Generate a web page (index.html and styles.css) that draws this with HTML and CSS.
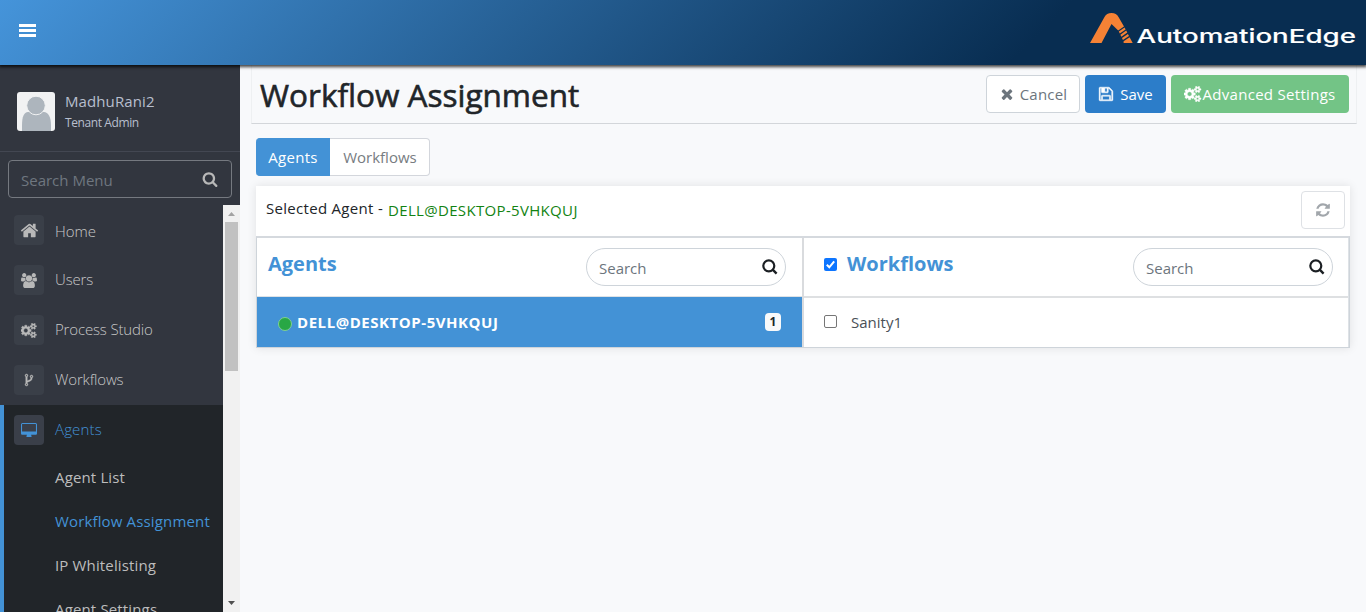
FILE: index.html
```html
<!DOCTYPE html>
<html lang="en">
<head>
<meta charset="utf-8">
<title>Workflow Assignment</title>
<link rel="stylesheet" href="styles.css">
</head>
<body>
<svg class="defs" width="0" height="0">
  <symbol id="search" viewBox="0 0 1792 1792"><path d="M1216 832q0-185-131.500-316.500t-316.500-131.500-316.500 131.500-131.500 316.500 131.500 316.500 316.500 131.500 316.500-131.500 131.500-316.500zm512 832q0 52-38 90t-90 38q-54 0-90-38l-343-342q-179 124-399 124-143 0-273.500-55.500t-225-150-150-225-55.500-273.500 55.500-273.500 150-225 225-150 273.500-55.500 273.500 55.500 225 150 150 225 55.500 273.500q0 220-124 399l343 343q37 37 37 90z"/></symbol>
  <symbol id="home" viewBox="0 0 1792 1792"><path d="M1472 992v480q0 26-19 45t-45 19h-384v-384h-256v384h-384q-26 0-45-19t-19-45v-480q0-1 .5-3t.5-3l575-474 575 474q1 2 1 6zm223-69l-62 74q-8 9-21 11h-3q-13 0-21-7l-692-577-692 577q-12 8-24 7-13-2-21-11l-62-74q-8-10-7-23.500t11-21.500l719-599q32-26 76-26t76 26l244 204v-195q0-14 9-23t23-9h192q14 0 23 9t9 23v408l219 182q10 8 11 21.500t-7 23.500z"/></symbol>
  <symbol id="users" viewBox="-64 0 1920 1792"><path d="M529 896q-162 5-265 128h-134q-82 0-138-40.500t-56-118.500q0-353 124-353 6 0 43.500 21t97.500 42.500 119 21.500q67 0 133-23-5 37-5 66 0 139 81 256zm1071 637q0 120-73 189.500t-194 69.500h-874q-121 0-194-69.500t-73-189.500q0-53 3.500-103.500t14-109 26.500-108.500 43-97.500 62-81 85.500-53.500 111.500-20q10 0 43 21.500t73 48 107 48 135 21.500 135-21.500 107-48 73-48 43-21.500q61 0 111.500 20t85.500 53.500 62 81 43 97.500 26.500 108.500 14 109 3.500 103.500zm-1024-1277q0 106-75 181t-181 75-181-75-75-181 75-181 181-75 181 75 75 181zm704 384q0 159-112.500 271.500t-271.500 112.500-271.500-112.500-112.500-271.500 112.500-271.500 271.500-112.500 271.500 112.500 112.500 271.500zm576 225q0 78-56 118.500t-138 40.500h-134q-103-123-265-128 81-117 81-256 0-29-5-66 66 23 133 23 59 0 119-21.500t97.500-42.500 43.500-21q124 0 124 353zm-128-609q0 106-75 181t-181 75-181-75-75-181 75-181 181-75 181 75 75 181z"/></symbol>
  <symbol id="cogs" viewBox="0 0 1920 1792"><path d="M832 896q0-106-75-181t-181-75-181 75-75 181 75 181 181 75 181-75 75-181zm768 512q0-52-38-90t-90-38-90 38-38 90q0 53 37.500 90.500t90.500 37.500 90.500-37.500 37.500-90.500zm0-1024q0-52-38-90t-90-38-90 38-38 90q0 53 37.500 90.500t90.500 37.500 90.500-37.500 37.500-90.500zm-384 421v185q0 10-7 19.500t-16 10.500l-155 24q-11 35-32 76 34 48 90 115 7 11 7 20 0 12-7 19-23 30-82.500 89.500t-78.500 59.500q-11 0-21-7l-115-90q-37 19-77 31-11 108-23 155-7 24-30 24h-186q-11 0-20-7.500t-10-17.500l-23-153q-34-10-75-31l-118 89q-7 7-20 7-11 0-21-8-144-133-144-160 0-9 7-19 10-14 41-53t47-61q-23-44-35-82l-152-24q-10-1-17-9.500t-7-19.500v-185q0-10 7-19.500t16-10.500l155-24q11-35 32-76-34-48-90-115-7-11-7-20 0-12 7-20 22-30 82-89t79-59q11 0 21 7l115 90q34-18 77-32 11-108 23-154 7-24 30-24h186q11 0 20 7.500t10 17.500l23 153q34 10 75 31l118-89q8-7 20-7 11 0 21 8 144 133 144 160 0 9-7 19-12 16-42 54t-45 60q23 48 34 82l152 23q10 2 17 10.500t7 19.500zm640 533v140q0 16-149 31-12 27-30 52 51 113 51 138 0 4-4 7-122 71-124 71-8 0-46-47t-52-68q-20 2-30 2t-30-2q-14 21-52 68t-46 47q-2 0-124-71-4-3-4-7 0-25 51-138-18-25-30-52-149-15-149-31v-140q0-16 149-31 13-29 30-52-51-113-51-138 0-4 4-7 4-2 35-20t59-34 30-16q8 0 46 46.500t52 67.500q20-2 30-2t30 2q51-71 92-112l6-2q4 0 124 70 4 3 4 7 0 25-51 138 17 23 30 52 149 15 149 31zm0-1024v140q0 16-149 31-12 27-30 52 51 113 51 138 0 4-4 7-122 71-124 71-8 0-46-47t-52-68q-20 2-30 2t-30-2q-14 21-52 68t-46 47q-2 0-124-71-4-3-4-7 0-25 51-138-18-25-30-52-149-15-149-31v-140q0-16 149-31 13-29 30-52-51-113-51-138 0-4 4-7 4-2 35-20t59-34 30-16q8 0 46 46.500t52 67.500q20-2 30-2t30 2q51-71 92-112l6-2q4 0 124 70 4 3 4 7 0 25-51 138 17 23 30 52 149 15 149 31z"/></symbol>
  <symbol id="fork" viewBox="0 0 1792 1792"><path d="M672 1472q0-40-28-68t-68-28-68 28-28 68 28 68 68 28 68-28 28-68zm0-1152q0-40-28-68t-68-28-68 28-28 68 28 68 68 28 68-28 28-68zm640 128q0-40-28-68t-68-28-68 28-28 68 28 68 68 28 68-28 28-68zm96 0q0 52-26 96.500t-70 69.500q-2 287-226 414-67 38-203 81-128 40-169.500 71t-41.500 100v26q44 25 70 69.500t26 96.500q0 80-56 136t-136 56-136-56-56-136q0-52 26-96.500t70-69.500v-820q-44-25-70-69.500t-26-96.500q0-80 56-136t136-56 136 56 56 136q0 52-26 96.500t-70 69.500v497q54-26 154-57 55-17 87.500-29.500t70.500-31 59-39.500 40.500-51 28-69.500 8.500-91.500q-44-25-70-69.500t-26-96.500q0-80 56-136t136-56 136 56 56 136z"/></symbol>
  <symbol id="desktop" viewBox="-64 0 1920 1792"><path d="M1728 992v-832q0-13-9.500-22.500t-22.500-9.500h-1600q-13 0-22.500 9.500t-9.500 22.500v832q0 13 9.500 22.500t22.500 9.500h1600q13 0 22.500-9.500t9.500-22.500zm128-832v1088q0 66-47 113t-113 47h-544q0 37 16 77.500t32 71 16 43.500q0 26-19 45t-45 19h-512q-26 0-45-19t-19-45q0-14 16-44t32-70 16-78h-544q-66 0-113-47t-47-113v-1088q0-66 47-113t113-47h1600q66 0 113 47t47 113z"/></symbol>
  <symbol id="times" viewBox="0 0 1792 1792"><path d="M1490 1322q0 40-28 68l-136 136q-28 28-68 28t-68-28l-294-294-294 294q-28 28-68 28t-68-28l-136-136q-28-28-28-68t28-68l294-294-294-294q-28-28-28-68t28-68l136-136q28-28 68-28t68 28l294 294 294-294q28-28 68-28t68 28l136 136q28 28 28 68t-28 68l-294 294 294 294q28 28 28 68z"/></symbol>
  <symbol id="save" viewBox="0 0 1792 1792"><path d="M512 1536h768v-384h-768v384zm896 0h128v-896q0-14-10-38.500t-20-34.500l-281-281q-10-10-34-20t-39-10v416q0 40-28 68t-68 28h-576q-40 0-68-28t-28-68v-416h-128v1280h128v-416q0-40 28-68t68-28h832q40 0 68 28t28 68v416zm-384-928v-320q0-13-9.500-22.500t-22.500-9.500h-192q-13 0-22.500 9.500t-9.500 22.500v320q0 13 9.500 22.500t22.500 9.500h192q13 0 22.500-9.500t9.500-22.500zm640 32v928q0 40-28 68t-68 28h-1344q-40 0-68-28t-28-68v-1344q0-40 28-68t68-28h928q40 0 88 20t76 48l280 280q28 28 48 76t20 88z"/></symbol>
  <symbol id="refresh" viewBox="0 0 1792 1792"><path d="M1639 1056q0 5-1 7-64 268-268 434.500t-478 166.500q-146 0-282.500-55t-243.500-157l-129 129q-19 19-45 19t-45-19-19-45v-448q0-26 19-45t45-19h448q26 0 45 19t19 45-19 45l-137 137q71 66 161 102t187 36q134 0 250-65t186-179q11-17 53-117 8-23 30-23h192q13 0 22.500 9.500t9.500 22.500zm25-800v448q0 26-19 45t-45 19h-448q-26 0-45-19t-19-45 19-45l138-138q-148-137-349-137-134 0-250 65t-186 179q-11 17-53 117-8 23-30 23h-199q-13 0-22.500-9.500t-9.500-22.500v-7q65-268 270-434.500t480-166.500q146 0 284 55.500t245 156.500l130-129q19-19 45-19t45 19 19 45z"/></symbol>
  <symbol id="lens" viewBox="0 0 16 16"><circle cx="6.800" cy="6.800" r="5.500" fill="none" stroke="currentColor" stroke-width="2.200"/><path d="M10.700 10.700L14.600 14.600" stroke="currentColor" stroke-width="2.400"/></symbol>
</svg>

<header class="topbar">
  <svg class="menu" width="17" height="14" viewBox="0 0 17 14"><path d="M0 0h17v3H0zM0 5h17v3H0zM0 10h17v3H0z"/></svg>
  <svg class="logo" width="270" height="42" viewBox="0 0 270 42">
    <path fill="#f58235" d="M2 32L16.500 6Q18.500 2 23.500 2Q28.500 2 30.500 6L36 15.500L30.200 19.500L23.500 13L13.500 32Z"/>
    <path fill="#f58235" d="M30.800 20.600L36.600 16.600L37.600 18.400L31.800 22.500ZM32.400 23.700L38.200 19.600L39.300 21.600L33.300 25.700ZM34 27L39.900 22.900L41 25L34.900 29ZM35.600 30.200L41.600 26.200L44.700 32H35.600Z"/>
    <text x="48.500" y="32" textLength="219.500" lengthAdjust="spacingAndGlyphs">AutomationEdge</text>
  </svg>
</header>

<div class="layout">
  <aside class="sidebar">
    <div class="profile">
      <svg width="38" height="39" viewBox="0 0 38 39"><rect width="38" height="39" rx="3" fill="#f1f2f3"/><path d="M5 39V33C5 25 7 20 11 20H27C31 20 34 25 34 33V39Z" fill="#adb5bd"/><circle cx="19" cy="13.500" r="9.300" fill="#adb5bd" stroke="#f1f2f3"/></svg>
      <div class="who"><span class="name">MadhuRani2</span><span class="role">Tenant Admin</span></div>
    </div>
    <div class="menu-search"><span>Search Menu</span><svg width="16" height="16"><use href="#search"/></svg></div>
    <div class="scroller">
      <nav class="nav">
        <a class="item"><i><svg width="19" height="19"><use href="#home"/></svg></i><span class="t-home">Home</span></a>
        <a class="item"><i><svg width="16" height="15"><use href="#users"/></svg></i><span>Users</span></a>
        <a class="item"><i><svg class="bold" width="16" height="15"><use href="#cogs"/></svg></i><span>Process Studio</span></a>
        <a class="item"><i><svg class="bold" width="14" height="14"><use href="#fork"/></svg></i><span>Workflows</span></a>
        <div class="group">
          <a class="item on"><i><svg width="16" height="15"><use href="#desktop"/></svg></i><span>Agents</span></a>
          <a class="sub">Agent List</a>
          <a class="sub on">Workflow Assignment</a>
          <a class="sub">IP Whitelisting</a>
          <a class="sub">Agent Settings</a>
        </div>
      </nav>
      <div class="scrollbar">
        <svg width="7" height="4" viewBox="0 0 7 4"><path d="M0 4L3.500 0L7 4Z" fill="#a3a3a3"/></svg>
        <div class="thumb"></div>
        <svg width="7" height="4" viewBox="0 0 7 4"><path d="M0 0L3.500 4L7 0Z" fill="#505050"/></svg>
      </div>
    </div>
  </aside>

  <main class="main">
    <div class="titlebar">
      <h1>Workflow Assignment</h1>
      <div class="actions">
        <button class="btn cancel"><svg width="16" height="16"><use href="#times"/></svg><span>Cancel</span></button>
        <button class="btn save"><svg class="bold" width="16" height="16"><use href="#save"/></svg><span>Save</span></button>
        <button class="btn adv"><svg class="bold" width="18" height="16"><use href="#cogs"/></svg><span>Advanced Settings</span></button>
      </div>
    </div>
    <div class="tabs"><span class="tab active">Agents</span><span class="tab">Workflows</span></div>
    <section class="panel">
      <div class="selected">
        <p><span class="lbl">Selected Agent -</span><span class="val">DELL@DESKTOP-5VHKQUJ</span></p>
        <button class="refresh"><svg width="16" height="16"><use href="#refresh"/></svg></button>
      </div>
      <div class="cols">
        <div class="col left">
          <div class="head"><h2>Agents</h2><div class="search"><span>Search</span><svg width="16" height="16"><use href="#lens"/></svg></div></div>
          <div class="row active"><b class="dot"></b><span class="agent">DELL@DESKTOP-5VHKQUJ</span><span class="badge">1</span></div>
        </div>
        <div class="col right">
          <div class="head"><span class="check checked"><svg width="13" height="13" viewBox="0 0 13 13"><path d="M2.800 6.700L5.300 9.300L10.200 3.300" fill="none" stroke="#fff" stroke-width="2"/></svg></span><h2>Workflows</h2><div class="search"><span>Search</span><svg width="16" height="16"><use href="#lens"/></svg></div></div>
          <div class="row"><span class="check"></span><span class="wf">Sanity1</span></div>
        </div>
      </div>
    </section>
  </main>
</div>
</body>
</html>
```
FILE: styles.css
```css
* { box-sizing: border-box; }
body {
  margin: 0;
  height: 612px;
  overflow: hidden;
  display: flex;
  flex-direction: column;
  background: #f8f9fb;
  color: #212529;
  font: 15px/24px "Open Sans", "Noto Sans", sans-serif;
}
svg { display: block; fill: currentColor; flex: none; }
.bold { stroke: currentColor; stroke-width: 50px; }
.defs { display: none; }
h1, h2, p { margin: 0; }
button { font: inherit; margin: 0; }

.topbar {
  position: relative;
  z-index: 2;
  flex: none;
  height: 65px;
  display: flex;
  justify-content: space-between;
  align-items: flex-start;
  background: linear-gradient(135deg, #4594da, #082d51 75%);
  box-shadow: 0 1px 3px 1px rgba(0, 0, 0, .75);
  color: #fff;
}
.menu { margin: 24px 0 0 19px; }
.logo { margin: 11px 8px 0 0; }
.logo text { font: 500 19px Inter, sans-serif; stroke: #fff; stroke-width: .1px; }

.layout { flex: 1; min-height: 0; display: flex; }
.sidebar {
  width: 240px;
  flex: none;
  display: flex;
  flex-direction: column;
  background: #32363f;
  color: #b8bcc4;
}
.profile {
  height: 87px;
  flex: none;
  display: flex;
  gap: 10px;
  padding: 27px 0 0 17px;
  border-bottom: 1px solid #434752;
}
.who { display: flex; flex-direction: column; }
.name { line-height: 18px; color: #b8bfce; letter-spacing: .1px; }
.role { font-size: 12px; line-height: 26px; color: #b8bfce; letter-spacing: -.4px; }
.menu-search {
  height: 38px;
  flex: none;
  margin: 8px 8px 7px;
  padding: 2px 13px 0 12px;
  display: flex;
  justify-content: space-between;
  align-items: center;
  border: 1px solid #757980;
  border-radius: 4px;
  color: #6f7780;
}
.menu-search svg { color: #b8b8b8; margin-top: -3px; }
.scroller { flex: 1; min-height: 0; display: flex; }
.nav { flex: 1; overflow: hidden; font-weight: 300; color: #c8c8c8; }
.item {
  height: 50px;
  display: flex;
  align-items: center;
  gap: 11px;
  padding-left: 14px;
}
.item i {
  width: 30px;
  height: 30px;
  border-radius: 4px;
  background: #3a3f48;
  display: flex;
  align-items: center;
  justify-content: center;
  color: #b8b8b8;
}
.item span { margin-top: -3px; letter-spacing: -.15px; }
.item .t-home { margin-top: 1px; letter-spacing: 0; }
.group {
  border-left: 4px solid #4392d6;
  background: #212529;
  padding-bottom: 20px;
}
.group .item { padding-left: 10px; }
.group .item span { letter-spacing: .15px; }
.group .item i { background: #3a3f49; }
.item.on, .item.on i, .sub.on { color: #4392d6; }
.sub {
  display: block;
  height: 44px;
  line-height: 44px;
  padding-left: 51px;
  font-weight: 400;
  letter-spacing: .15px;
  white-space: nowrap;
  color: #bdbdbd;
}
.scrollbar {
  width: 17px;
  background: #f1f1f1;
  display: flex;
  flex-direction: column;
  align-items: center;
  padding: 7px 0;
}
.thumb { width: 13px; height: 149px; margin: 6px 0 auto; background: #c1c1c1; }

.main { flex: 1; padding: 0 9px 0 11px; }
.titlebar {
  height: 59px;
  display: flex;
  justify-content: space-between;
  padding: 10px 7px 0 8px;
  border: 1px solid #eef0f2;
  border-top: 0;
  border-bottom-color: #d3d6da;
}
h1 {
  font-size: 31.5px;
  line-height: 40px;
  font-weight: 500;
  white-space: nowrap;
  -webkit-text-stroke: .6px #212529;
}
.actions { display: flex; gap: 5px; }
.btn {
  height: 38px;
  display: flex;
  align-items: center;
  justify-content: center;
  border: 0;
  border-radius: 4px;
  color: #fff;
  white-space: nowrap;
  padding: 0;
}
.cancel { width: 94px; gap: 5px; background: #fff; border: 1px solid #ced4da; color: #6c757d; letter-spacing: .2px; }
.save { width: 81px; gap: 6px; background: #2c7dc9; }
.adv { width: 178px; background: #73c486; letter-spacing: .3px; }

.tabs { display: flex; margin: 14px 0 10px 5px; height: 38px; }
.tab {
  width: 100px;
  line-height: 36px;
  padding-left: 1px;
  text-align: center;
  background: #fff;
  border: 1px solid #d3d6dc;
  border-left: 0;
  border-radius: 0 4px 4px 0;
  color: #777c81;
}
.tab.active {
  width: 74px;
  background: #4392d6;
  border-color: #4392d6;
  border-radius: 4px 0 0 4px;
  color: #fff;
  letter-spacing: .3px;
}

.panel { width: 1094px; margin-left: 5px; background: #fff; box-shadow: 0 0 9px rgba(0, 0, 0, .1); }
.selected {
  height: 50px;
  display: flex;
  justify-content: space-between;
  padding: 5px 5px 0 10px;
}
.selected p { display: flex; gap: 5px; padding-top: 5px; }
.lbl { letter-spacing: .3px; }
.val { color: #128312; padding-top: 2px; letter-spacing: .33px; }
.refresh {
  width: 44px;
  height: 38px;
  display: flex;
  align-items: center;
  justify-content: center;
  padding: 0;
  background: #fff;
  border: 1px solid #dee1e5;
  border-radius: 4px;
  color: #a1a6ab;
}
.cols {
  height: 112px;
  display: flex;
  border: 1px solid #ced4da;
  border-top: 2px solid #d5d9de;
}
.left { width: 545px; }
.right { flex: 1; border-left: 2px solid #d9dbde; border-right: 1px solid #dee2e6; }
.head { height: 59px; display: flex; padding: 10px 16px 0 11px; border-bottom: 1px solid #dee2e6; }
.right .head { height: 60px; border-bottom: 2px solid #dee0e2; padding: 10px 15px 0 20px; }
h2 { font-size: 20px; line-height: 32px; font-weight: 700; color: #4392d6; }
.search {
  width: 200px;
  height: 38px;
  margin-left: auto;
  display: flex;
  justify-content: space-between;
  align-items: center;
  padding: 2px 7px 0 12px;
  border: 1px solid #ced4da;
  border-radius: 19px;
  color: #6c757d;
}
.search svg { color: #1b1f23; margin-top: -3px; }
.row { height: 50px; display: flex; align-items: center; padding-left: 20px; }
.row.active { background: #4392d6; color: #fff; font-weight: 700; padding: 0 21px 0 21px; }
.dot { width: 14px; height: 14px; margin: 3px 5px 0 0; border: 1px solid #7fd092; border-radius: 50%; background: #28a745; }
.agent { letter-spacing: .55px; }
.badge {
  width: 16px;
  height: 18px;
  margin-left: auto;
  border-radius: 4px;
  background: #f8f9fa;
  color: #212529;
  font-size: 12px;
  line-height: 18px;
  text-align: center;
}
.check { width: 13px; height: 13px; flex: none; border: 1px solid #767676; border-radius: 2px; }
.row .check { margin: -3px 14px 0 0; }
.head .check { margin: 10px 10px 0 0; border: 0; background: #0d75ff; }
.wf { color: #495057; margin-top: -2px; }
```
